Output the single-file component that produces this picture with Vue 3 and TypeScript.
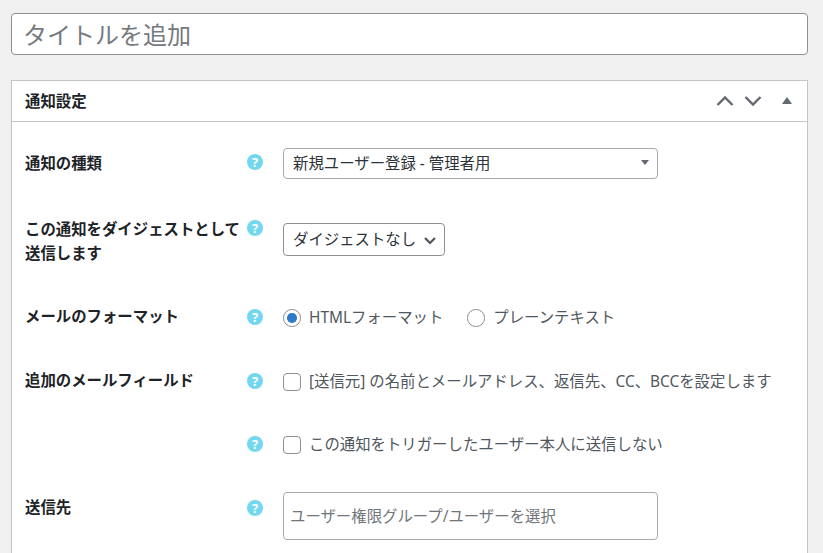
<script setup lang="ts">
import { ref } from 'vue'

const noticeType = ref('new-user-admin')
const digest = ref('none')
const format = ref('html')
const senderFields = ref(false)
const skipSelf = ref(false)
</script>

<template>
  <div class="page">
    <input class="title-input" type="text" placeholder="タイトルを追加" />

    <section class="postbox">
      <header class="postbox-header">
        <h2>通知設定</h2>
        <div class="handle-actions">
          <button type="button" class="handle" aria-label="上へ">
            <svg width="18" height="12" viewBox="0 0 18 12"><path d="M1.5 10 L9 2.5 L16.5 10" /></svg>
          </button>
          <button type="button" class="handle" aria-label="下へ">
            <svg width="18" height="12" viewBox="0 0 18 12"><path d="M1.5 2 L9 9.5 L16.5 2" /></svg>
          </button>
          <button type="button" class="toggle" aria-label="閉じる"><span class="tri-up"></span></button>
        </div>
      </header>

      <div class="fields">
        <div class="row row-type">
          <label class="label">通知の種類</label>
          <span class="help">?</span>
          <div class="select-wrap wide">
            <select v-model="noticeType">
              <option value="new-user-admin">新規ユーザー登録 - 管理者用</option>
            </select>
            <span class="caret-solid"></span>
          </div>
        </div>

        <div class="row row-digest">
          <label class="label">この通知をダイジェストとして送信します</label>
          <span class="help">?</span>
          <div class="select-wrap narrow">
            <select v-model="digest">
              <option value="none">ダイジェストなし</option>
            </select>
            <svg class="caret-line" width="12" height="8" viewBox="0 0 12 8"><path d="M1 1 L6 6 L11 1" /></svg>
          </div>
        </div>

        <div class="row">
          <label class="label">メールのフォーマット</label>
          <span class="help">?</span>
          <div class="radios">
            <label class="option"><input v-model="format" type="radio" value="html" />HTMLフォーマット</label>
            <label class="option"><input v-model="format" type="radio" value="plain" />プレーンテキスト</label>
          </div>
        </div>

        <div class="row">
          <label class="label">追加のメールフィールド</label>
          <span class="help">?</span>
          <label class="option"><input v-model="senderFields" type="checkbox" />[送信元] の名前とメールアドレス、返信先、CC、BCCを設定します</label>
        </div>

        <div class="row row-skip">
          <span class="label"></span>
          <span class="help">?</span>
          <label class="option"><input v-model="skipSelf" type="checkbox" />この通知をトリガーしたユーザー本人に送信しない</label>
        </div>

        <div class="row row-to">
          <label class="label">送信先</label>
          <span class="help">?</span>
          <input class="recipient" type="text" placeholder="ユーザー権限グループ/ユーザーを選択" />
        </div>
      </div>
    </section>
  </div>
</template>

<style scoped>
.page {
  height: 553px;
  box-sizing: border-box;
  padding: 13px 15px 0 11px;
  overflow: hidden;
  background: #f0f0f1;
  color: #2c3338;
  font-family: "Noto Sans", "Noto Sans CJK JP", sans-serif;
  font-size: 15.4px;
}

.title-input {
  display: block;
  width: 100%;
  height: 42px;
  box-sizing: border-box;
  padding: 0 11px;
  border: 1px solid #8c8f94;
  border-radius: 4px;
  background: #fff;
  font: inherit;
  font-size: 24px;
  color: #2c3338;
}

.title-input::placeholder {
  color: #757a80;
  opacity: 1;
}

.postbox {
  margin-top: 25px;
  height: 600px;
  border: 1px solid #c3c4c7;
  background: #fff;
}

.postbox-header {
  display: flex;
  align-items: center;
  justify-content: space-between;
  height: 40px;
  padding-left: 13px;
  border-bottom: 1px solid #c3c4c7;
}

.postbox-header h2 {
  margin: -1px 0 0;
  font-size: 15.4px;
  font-weight: 700;
  color: #1d2327;
}

.handle-actions {
  display: flex;
  align-items: center;
  margin-right: 10px;
}

.handle,
.toggle {
  display: flex;
  align-items: center;
  justify-content: center;
  padding: 0;
  border: 0;
  background: none;
}

.handle {
  width: 28px;
  height: 20px;
}

.handle path {
  fill: none;
  stroke: #646970;
  stroke-width: 2.4;
}

.toggle {
  width: 20px;
  height: 20px;
  margin-left: 10px;
}

.tri-up {
  width: 0;
  height: 0;
  margin-top: -2px;
  border-left: 5px solid transparent;
  border-right: 5px solid transparent;
  border-bottom: 7px solid #646970;
}

.fields {
  padding: 26px 13px 0;
}

.row {
  display: grid;
  grid-template-columns: 216px 42px 1fr;
  align-items: center;
  margin-bottom: 40px;
}

.row-type {
  margin-bottom: 38px;
}

.row-digest {
  margin-bottom: 40px;
  align-items: start;
}

.row-skip {
  margin-bottom: 36px;
}

.row-to {
  align-items: start;
}

.label {
  margin: -1px 0 1px;
  font-weight: 700;
  line-height: 24px;
  color: #1d2327;
}

.row-type .label {
  margin: 0;
}

.row-digest .label {
  margin: 1px 0 0;
}

.row-to .label {
  margin: 4px 0 0;
}

.help {
  width: 16px;
  height: 16px;
  margin: 0 0 2px 6px;
  border-radius: 50%;
  background: #73d7ee;
  color: #fff;
  font-size: 13px;
  font-weight: 700;
  line-height: 16px;
  text-align: center;
}

.row-type .help {
  align-self: start;
  margin-top: 6px;
}

.row-digest .help {
  margin-top: 3px;
}

.row-to .help {
  margin-top: 8px;
}

.select-wrap {
  position: relative;
}

.select-wrap.wide {
  width: 375px;
}

.select-wrap.narrow {
  width: 162px;
  margin-top: 6px;
}

.select-wrap select {
  display: block;
  width: 100%;
  box-sizing: border-box;
  padding: 0 0 0 9px;
  border: 1px solid #8c8f94;
  border-radius: 4px;
  background: #fff;
  font: inherit;
  color: #2c3338;
  appearance: none;
}

.wide select {
  height: 31px;
  border-color: #a7aaad;
}

.narrow select {
  height: 33px;
}

.caret-solid {
  position: absolute;
  top: 12px;
  right: 9px;
  width: 0;
  height: 0;
  border-left: 4px solid transparent;
  border-right: 4px solid transparent;
  border-top: 5px solid #646970;
  pointer-events: none;
}

.caret-line {
  position: absolute;
  top: 14px;
  right: 9px;
  pointer-events: none;
}

.caret-line path {
  fill: none;
  stroke: #50575e;
  stroke-width: 2.2;
}

.radios {
  display: flex;
  gap: 24px;
}

.option {
  display: flex;
  align-items: center;
  gap: 8.4px;
  line-height: 22px;
  color: #50575e;
}

.option input {
  flex: none;
  box-sizing: border-box;
  width: 17.6px;
  height: 17.6px;
  margin: 0;
  border: 1px solid #8c8f94;
  background: #fff;
  appearance: none;
}

.option input[type="checkbox"] {
  border-radius: 4px;
}

.option input[type="radio"] {
  display: grid;
  place-items: center;
  border-radius: 50%;
}

.option input[type="radio"]:checked::before {
  content: "";
  width: 9.5px;
  height: 9.5px;
  border-radius: 50%;
  background: #2f7ac6;
}

.recipient {
  display: block;
  width: 375px;
  height: 48px;
  box-sizing: border-box;
  padding: 0 6px;
  border: 1px solid #a7aaad;
  border-radius: 4px;
  font: inherit;
  color: #2c3338;
}

.recipient::placeholder {
  color: #70757a;
  opacity: 1;
}
</style>

<style>
html,
body {
  overflow: hidden;
}
</style>
